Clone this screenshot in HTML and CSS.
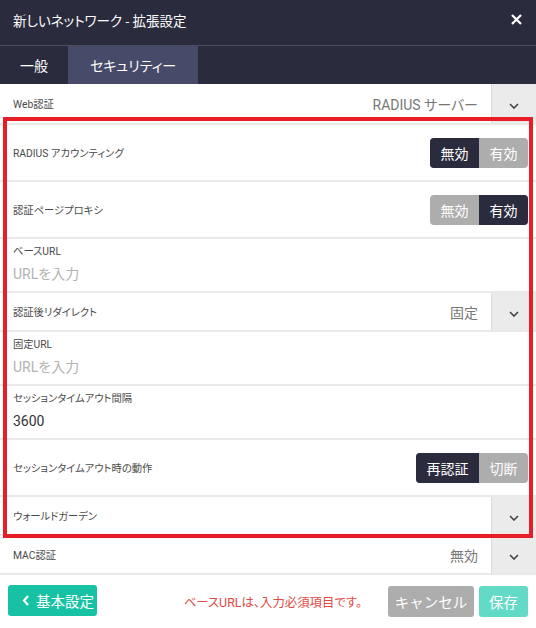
FILE: index.html
```html
<!DOCTYPE html>
<html lang="ja">
<head>
    <meta charset="UTF-8">
    <meta name="viewport" content="width=device-width, initial-scale=1.0">
    <title>新しいネットワーク - 拡張設定</title>
    <link rel="stylesheet" href="styles.css">
</head>
<body>
    <div class="dialog">
        <header class="titlebar">
            <h1>新しいネットワーク - 拡張設定</h1>
            <button class="close" type="button" aria-label="閉じる">
                <svg width="11" height="11" viewBox="0 0 11 11"><path d="M1 1L10 10M10 1L1 10" stroke="#fff" stroke-width="2.3" fill="none"/></svg>
            </button>
        </header>

        <nav class="tabs">
            <a class="tab" href="#">一般</a>
            <a class="tab active" href="#">セキュリティー</a>
        </nav>

        <div class="settings">
            <div class="row select-row first">
                <span class="label">Web認証</span>
                <span class="value">RADIUS サーバー</span>
                <span class="dd"><svg width="10" height="6" viewBox="0 0 10 6"><path d="M1 1l4 4 4-4" stroke="#444" stroke-width="1.6" fill="none"/></svg></span>
            </div>

            <div class="row toggle-row">
                <span class="label">RADIUS アカウンティング</span>
                <div class="toggle">
                    <span class="on">無効</span><span>有効</span>
                </div>
            </div>

            <div class="row toggle-row">
                <span class="label">認証ページプロキシ</span>
                <div class="toggle">
                    <span>無効</span><span class="on">有効</span>
                </div>
            </div>

            <div class="row field-row">
                <span class="label">ベースURL</span>
                <input class="input" type="text" placeholder="URLを入力">
            </div>

            <div class="row select-row">
                <span class="label">認証後リダイレクト</span>
                <span class="value">固定</span>
                <span class="dd"><svg width="10" height="6" viewBox="0 0 10 6"><path d="M1 1l4 4 4-4" stroke="#444" stroke-width="1.6" fill="none"/></svg></span>
            </div>

            <div class="row field-row">
                <span class="label">固定URL</span>
                <input class="input" type="text" placeholder="URLを入力">
            </div>

            <div class="row field-row">
                <span class="label">セッションタイムアウト間隔</span>
                <input class="input" type="text" value="3600">
            </div>

            <div class="row toggle-row">
                <span class="label">セッションタイムアウト時の動作</span>
                <div class="toggle">
                    <span class="on">再認証</span><span>切断</span>
                </div>
            </div>

            <div class="row select-row">
                <span class="label">ウォールドガーデン</span>
                <span class="value"></span>
                <span class="dd"><svg width="10" height="6" viewBox="0 0 10 6"><path d="M1 1l4 4 4-4" stroke="#444" stroke-width="1.6" fill="none"/></svg></span>
            </div>

            <div class="row select-row">
                <span class="label">MAC認証</span>
                <span class="value">無効</span>
                <span class="dd"><svg width="10" height="6" viewBox="0 0 10 6"><path d="M1 1l4 4 4-4" stroke="#444" stroke-width="1.6" fill="none"/></svg></span>
            </div>

            <!-- annotation box around the Web auth sub-settings -->
            <div class="highlight"></div>
        </div>

        <footer class="footer">
            <button class="btn btn-back" type="button">
                <svg width="8" height="11" viewBox="0 0 8 11"><path d="M6 1L2 5.5 6 10" stroke="#fff" stroke-width="2.2" fill="none"/></svg>
                基本設定
            </button>
            <span class="error">ベースURLは、入力必須項目です。</span>
            <button class="btn btn-cancel" type="button">キャンセル</button>
            <button class="btn btn-save" type="button">保存</button>
        </footer>
    </div>
</body>
</html>
```

FILE: styles.css
```css
:root {
    --dark: #2a2b3d;
    --tab-active: #474a68;
    --line: #e9e9e9;
    --label: #4a4a4a;
    --muted: #777;
    --placeholder: #b3b3b3;
    --toggle-off: #adadad;
    --teal: #17c2a4;
    --teal-light: #62dac6;
    --error: #e04a45;
}

* {
    box-sizing: border-box;
    margin: 0;
    padding: 0;
}

body {
    font-family: Roboto, "Noto Sans CJK JP", sans-serif;
    font-feature-settings: "palt";
    background: #fff;
    color: #333;
}

.dialog {
    width: 536px;
    height: 628px;
    display: flex;
    flex-direction: column;
}

/* header */
.titlebar {
    height: 46px;
    background: var(--dark);
    border-bottom: 1px solid #4b4c5f;
    display: flex;
    align-items: center;
    justify-content: space-between;
    padding: 0 14px 6px 13px;
}

.titlebar h1 {
    color: #fff;
    font-size: 13.5px;
    font-weight: 400;
}

.close {
    background: none;
    border: none;
    display: flex;
}

.tabs {
    height: 38px;
    background: var(--dark);
    display: flex;
}

.tab {
    display: flex;
    align-items: center;
    padding: 0 20px;
    color: #fff;
    font-size: 14px;
    text-decoration: none;
}

.tab.active {
    background: var(--tab-active);
    padding: 0 22px;
}

/* rows */
.settings {
    position: relative;
    flex: 1;
}

.row {
    display: flex;
    align-items: center;
    border-bottom: 2px solid var(--line);
}

.label {
    font-size: 10.3px;
    color: var(--label);
    padding-left: 13px;
    flex: 1;
}

.select-row {
    height: 39px;
    align-items: stretch;
}

.select-row.first {
    height: 41px;
}

.select-row .label,
.select-row .value {
    display: flex;
    align-items: center;
}

.value {
    font-size: 14px;
    color: var(--muted);
    padding-right: 13px;
}

.dd {
    width: 45px;
    background: #ebebeb;
    border-left: 1px solid #dcdcdc;
    display: flex;
    align-items: center;
    justify-content: center;
    padding-top: 4px;
}

.toggle-row {
    height: 57px;
    padding-right: 8px;
}

.toggle {
    display: flex;
    height: 30px;
    border-radius: 4px;
    overflow: hidden;
    background: var(--toggle-off);
}

.toggle span {
    display: flex;
    align-items: center;
    padding: 0 10.5px;
    color: #fff;
    font-size: 14px;
}

.toggle .on {
    background: var(--dark);
}

.field-row {
    height: 54px;
    flex-direction: column;
    align-items: stretch;
    padding-top: 7px;
}

.field-row .label {
    flex: none;
    line-height: 12px;
}

.input {
    border: none;
    outline: none;
    font: inherit;
    font-size: 14px;
    color: #333;
    padding: 6px 13px 0;
    height: 26px;
    background: transparent;
}

.input::placeholder {
    color: var(--placeholder);
}

.highlight {
    position: absolute;
    left: 3px;
    top: 33px;
    width: 530px;
    height: 421px;
    border: 4px solid #e81e27;
    pointer-events: none;
}

/* footer */
.footer {
    height: 53px;
    display: flex;
    align-items: center;
    padding: 0 8px;
}

.btn {
    height: 31px;
    border: none;
    border-radius: 3px;
    color: #fff;
    font-family: inherit;
    font-size: 14.5px;
    display: flex;
    align-items: center;
}

.btn-back {
    background: var(--teal);
    width: 89px;
    padding-left: 14px;
    gap: 6px;
    margin-top: -3px;
}

.error {
    margin-left: auto;
    margin-right: 26px;
    color: var(--error);
    font-size: 12.4px;
}

.btn-cancel {
    background: var(--toggle-off);
    width: 86px;
    justify-content: center;
    margin-right: 5px;
}

.btn-save {
    background: var(--teal-light);
    width: 49px;
    justify-content: center;
}
```
